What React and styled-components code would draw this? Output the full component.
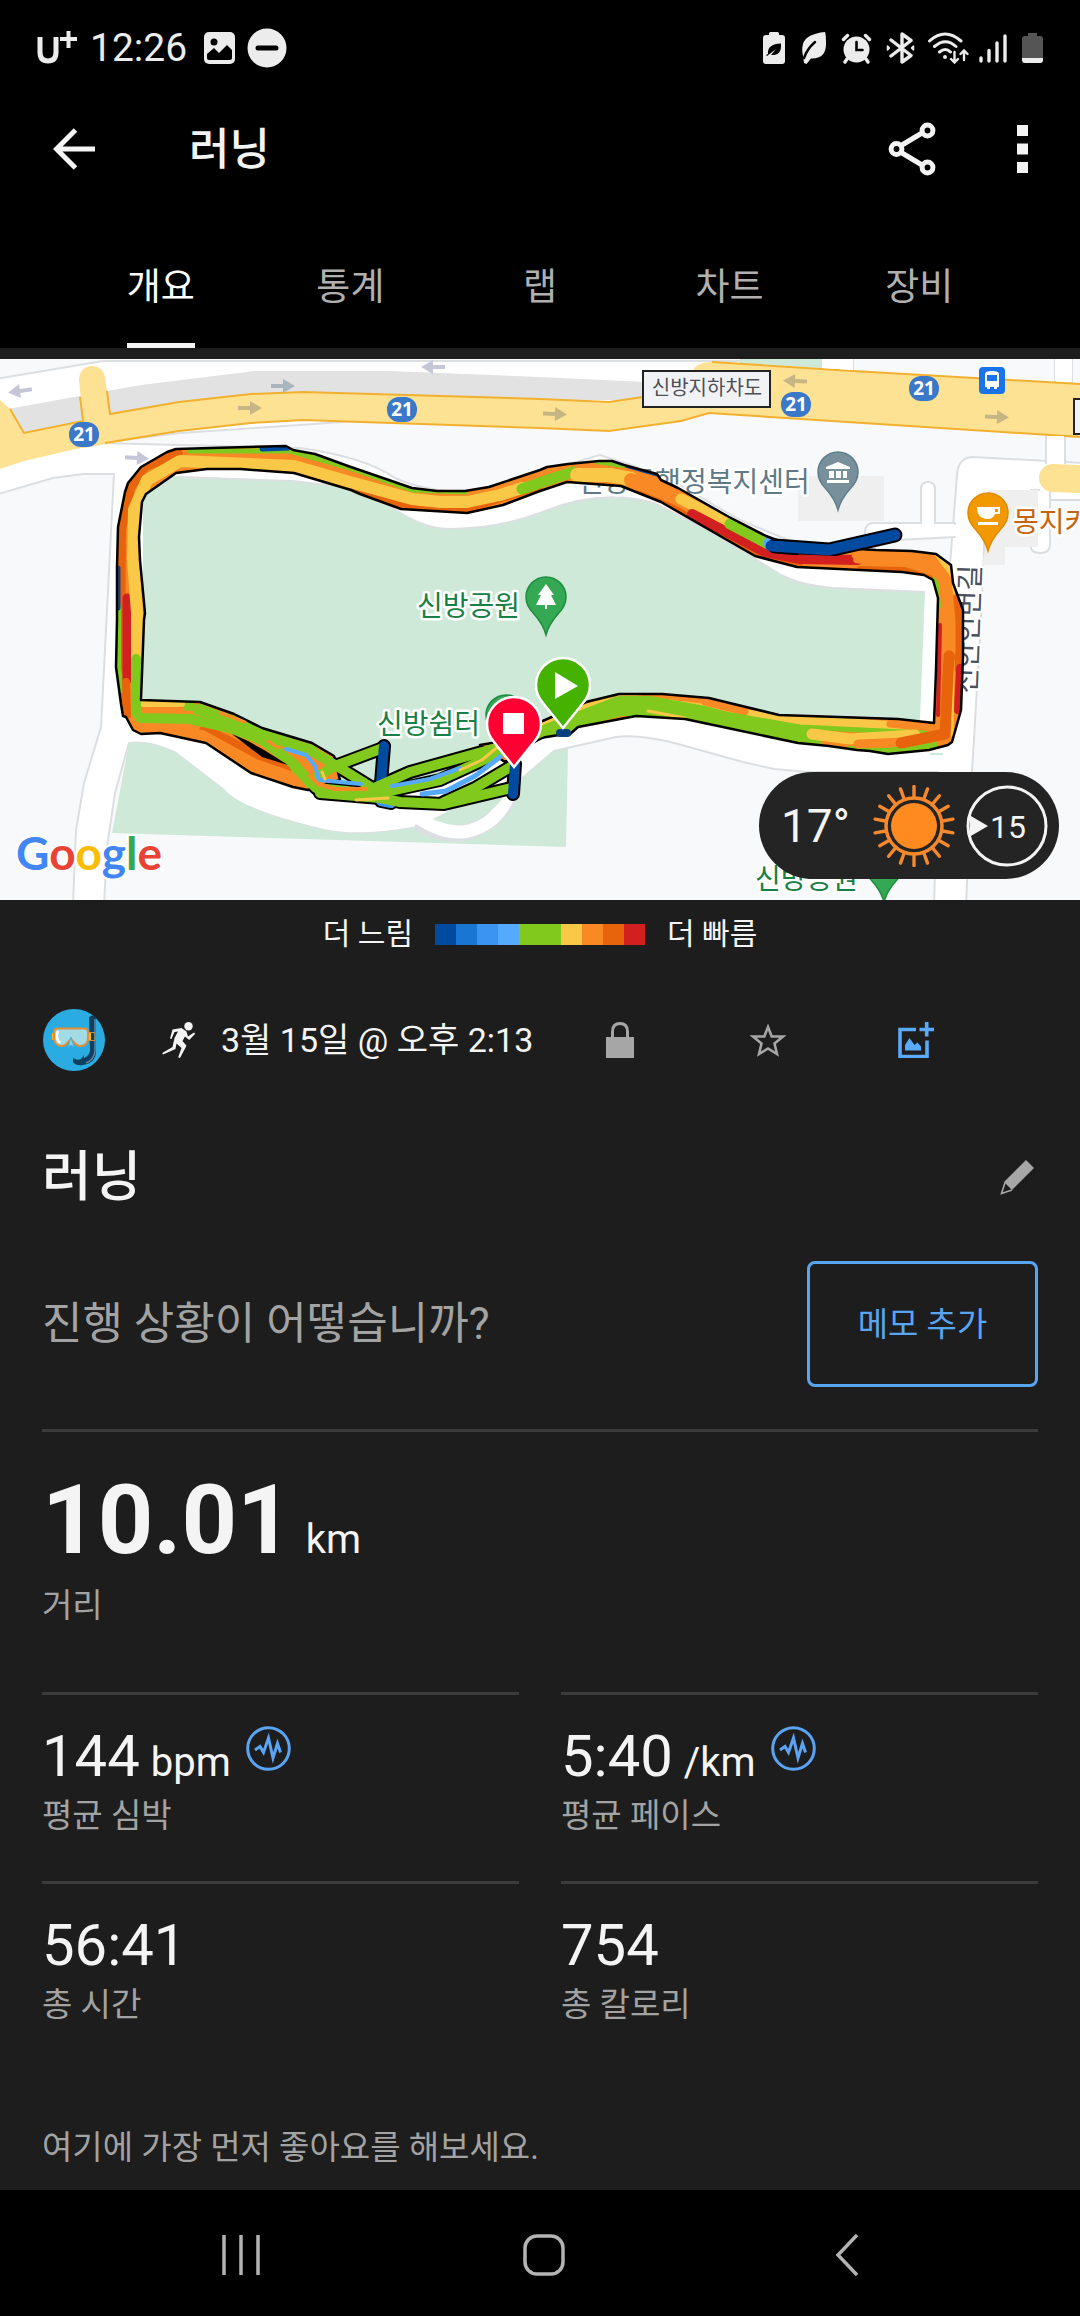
import styled, { createGlobalStyle } from 'styled-components';

const GlobalStyle = createGlobalStyle`
  * {
    box-sizing: border-box;
  }

  body {
    margin: 0;
    background: #1d1d1d;
    color: #f4f4f4;
    font-family: Roboto, 'Noto Sans CJK KR', sans-serif;
  }

  button {
    margin: 0;
    padding: 0;
    border: 0;
    background: none;
    color: inherit;
    font: inherit;
  }

  svg {
    display: block;
  }
`;

const Screen = styled.div`
  display: flex;
  flex-direction: column;
  min-height: 100vh;
`;

const Top = styled.header`
  background: #000;
`;

const StatusBar = styled.div`
  display: flex;
  align-items: center;
  justify-content: space-between;
  height: 96px;
  padding: 0 35px 0 36px;
  color: #ececec;
`;

const StatusLeft = styled.div`
  display: flex;
  align-items: center;
  gap: 12px;
`;

const Clock = styled.span`
  margin-right: 5px;
  font-size: 39px;
  line-height: 48px;
`;

const StatusRight = styled.div`
  display: flex;
  align-items: center;
  gap: 8px;
`;

const AppBar = styled.div`
  display: flex;
  align-items: center;
  height: 105px;
  padding: 0 2px 0 42px;
`;

const IconButton = styled.button`
  display: grid;
  place-items: center;
  width: ${({ $width }) => $width || 64}px;
  height: 64px;
  color: ${({ $color }) => $color || '#f4f4f4'};
`;

const BarTitle = styled.h1`
  flex: 1;
  margin: 0 0 0 83px;
  padding-top: 2px;
  font-size: 44px;
  font-weight: 500;
  line-height: 56px;
`;

const Tabs = styled.nav`
  display: flex;
  height: 147px;
  padding: 0 66px;
`;

const Tab = styled.button`
  flex: 1;
  display: flex;
  align-items: flex-end;
  justify-content: center;
  color: ${({ $active }) => ($active ? '#fff' : '#b0b0b0')};
  font-size: 37px;
  line-height: 48px;

  span {
    padding-bottom: 31px;
    border-bottom: 5px solid ${({ $active }) => ($active ? '#f4f4f4' : 'transparent')};
  }
`;

const Main = styled.main`
  flex: 1;
  padding-top: 11px;
`;

const MapFrame = styled.section`
  position: relative;

  > svg {
    width: 100%;
    height: auto;
  }
`;

const Weather = styled.div`
  position: absolute;
  right: 21px;
  bottom: 21px;
  display: flex;
  align-items: center;
  gap: 11px;
  width: 300px;
  height: 107px;
  padding: 0 11px 0 22px;
  border-radius: 54px;
  background: #242424;
  font-size: 46px;

  span {
    flex: 1;
  }
`;

const Legend = styled.div`
  display: flex;
  align-items: center;
  justify-content: center;
  gap: 22px;
  height: 64px;
  padding-top: 4px;
  font-size: 30px;
  line-height: 48px;
`;

const Scale = styled.div`
  display: flex;
`;

const Swatch = styled.i`
  width: 21px;
  height: 21px;
  background: ${({ $color }) => $color};
`;

const Meta = styled.div`
  display: flex;
  align-items: center;
  height: 152px;
  padding: 0 90px 0 43px;
`;

const When = styled.div`
  flex: 1;
  display: flex;
  align-items: center;
  gap: 25px;
  margin-left: 57px;
  font-size: 34px;
  line-height: 48px;
  white-space: nowrap;
`;

const TitleRow = styled.div`
  display: flex;
  align-items: center;
  justify-content: space-between;
  height: 122px;
  padding: 0 31px 0 42px;
`;

const Title = styled.h2`
  margin: 0;
  padding-top: 2px;
  font-size: 54px;
  font-weight: 500;
  line-height: 64px;
`;

const NoteRow = styled.div`
  display: flex;
  align-items: center;
  justify-content: space-between;
  padding: 23px 42px 42px;
  color: #a3a3a3;
  font-size: 44px;
  line-height: 56px;
`;

const NoteButton = styled.button`
  width: 231px;
  height: 126px;
  padding-top: 2px;
  border: 3px solid #5aa5f3;
  border-radius: 8px;
  color: #5aa5f3;
  font-size: 33px;
`;

const Stats = styled.dl`
  display: grid;
  grid-template-columns: 1fr 1fr;
  column-gap: 42px;
  margin: 0 42px;
`;

const Stat = styled.div`
  display: flex;
  flex-direction: column;
  grid-column: ${({ $wide }) => ($wide ? '1 / -1' : 'auto')};
  padding: ${({ $wide }) => ($wide ? '28px 0 62px' : '27px 0 41px')};
  border-top: 3px solid #3b3b3b;
`;

const Value = styled.dd`
  display: flex;
  align-items: baseline;
  order: -1;
  margin: 0 0 2px;
  font-size: ${({ $large }) => ($large ? 97 : 58)}px;
  font-weight: ${({ $large }) => ($large ? 700 : 400)};
  line-height: ${({ $large }) => ($large ? 120 : 68)}px;
  white-space: pre;

  small {
    margin-left: ${({ $large }) => ($large ? 13 : 11)}px;
    font-size: 40px;
    font-weight: 400;
    line-height: 40px;
  }

  svg {
    align-self: flex-start;
    margin: 4px 0 0 15px;
  }
`;

const Label = styled.dt`
  color: #a3a3a3;
  font-size: 33px;
  line-height: 48px;
`;

const Likes = styled.p`
  margin: 0;
  padding: 54px 42px 18px;
  color: #a3a3a3;
  font-size: 33px;
  line-height: 48px;
`;

const SystemNav = styled.footer`
  display: flex;
  height: 126px;
  padding: 4px 82px 0 90px;
  background: #000;
`;

const NavButton = styled.button`
  flex: 1;
  display: grid;
  place-items: center;
`;

const MapText = styled.text`
  fill: ${({ $fill }) => $fill};
  font-family: Roboto, 'Noto Sans CJK KR', sans-serif;
  font-size: 28px;
  paint-order: stroke;
  stroke: #fff;
  stroke-width: 5px;
  stroke-linejoin: round;
`;

const ShieldText = styled.text`
  fill: #fff;
  font-family: 'Noto Sans', sans-serif;
  font-size: 19px;
  font-weight: 700;
  text-anchor: middle;
`;

const SignText = styled.text`
  fill: #4d4f55;
  font-family: 'Noto Sans CJK KR', sans-serif;
  font-size: 20px;
  text-anchor: middle;
`;

const LogoText = styled.text`
  font-family: Lato, sans-serif;
  font-size: 46px;
  font-weight: 700;
  paint-order: stroke;
  stroke: #fff;
  stroke-width: 4px;
  stroke-linejoin: round;
`;

const tabs = ['개요', '통계', '랩', '차트', '장비'];

const scale = [
  '#004a9f', '#1976d2', '#3c94f2', '#55aaff', '#82c91e',
  '#82c91e', '#f9c846', '#f98925', '#e8640c', '#d21f20',
];

const stats = [
  { value: '144', unit: 'bpm', label: '평균 심박', graph: true },
  { value: '5:40', unit: '/km', label: '평균 페이스', graph: true },
  { value: '56:41', label: '총 시간' },
  { value: '754', label: '총 칼로리' },
];

/* ---------- status icons ---------- */

const Carrier = () => (
  <svg width="42" height="40" viewBox="0 0 42 40" fill="none" stroke="currentColor">
    <path d="M4 9v15q0 9 8 9t8-9V9" strokeWidth="5" />
    <path d="M24 11h17M32.500 3v17" strokeWidth="4" />
  </svg>
);

const PictureIcon = () => (
  <svg width="31" height="32" viewBox="0 0 31 32">
    <rect width="31" height="32" rx="5" fill="currentColor" />
    <circle cx="10" cy="10" r="3.500" />
    <path d="M3 22l7-6 5 5 8-8 5 5v8q0 2-2 2H5q-2 0-2-2z" />
  </svg>
);

const DndIcon = () => (
  <svg width="40" height="40" viewBox="0 0 40 40">
    <circle cx="20" cy="20" r="19.500" fill="currentColor" />
    <rect x="8.500" y="17.500" width="23" height="5" rx="2.500" />
  </svg>
);

const StatusIcons = () => (
  <>
    <svg width="26" height="32" viewBox="0 0 26 32">
      <path d="M6 3V1.500Q6 0 7.500 0h7Q16 0 16 1.500V3h3q3 0 3 3v23q0 3-3 3H3q-3 0-3-3V6q0-3 3-3z" fill="currentColor" />
      <path d="M5 22Q4 12 18 11.500 19 24 8 23l5-6-9 7-1-1z" />
    </svg>
    <svg width="34" height="32" viewBox="0 0 34 32">
      <path d="M6 24Q2 6 18 2q6-2 10-2 1 2 1 12 0 15-15 14.500L9.500 32 7 31z" fill="currentColor" />
      <path d="M7 26q3-9 11-16" fill="none" stroke="#000" strokeWidth="2.400" strokeLinecap="round" />
    </svg>
    <svg width="36" height="32" viewBox="0 0 36 32" fill="none" stroke="currentColor" strokeWidth="3.400" strokeLinecap="round">
      <circle cx="17.500" cy="17.500" r="13" fill="currentColor" stroke="none" />
      <path d="M4.500 7.500l4-4M30.500 7.500l-4-4M8 27l-2 3M27 27l2 3" />
      <path d="M17.500 10v8h6" stroke="#000" strokeWidth="2.600" />
    </svg>
    <svg width="34" height="32" viewBox="0 0 34 32" fill="none" stroke="currentColor" strokeWidth="3.400" strokeLinejoin="round" strokeLinecap="round">
      <path d="M8 8l20 15.500-9 6.500V2l9 6.500L8 24" />
      <path d="M4.500 14v4l2-2zM30.500 14v4l-2-2z" strokeWidth="1.500" fill="currentColor" />
    </svg>
    <svg width="46" height="32" viewBox="0 0 46 32" fill="none" stroke="currentColor" strokeWidth="3" strokeLinecap="round">
      <path d="M4.500 9q15.500-14 31.500 0M9.500 14.500q11-9.500 21.500 0M14.500 20q6-5 11 0" />
      <circle cx="20" cy="25" r="2" fill="currentColor" stroke="none" />
      <path d="M29.500 20v9M26 27l3.500 3.500L33 27M39 28v-9M35.500 22l3.500-3.500 3.500 3.500" strokeWidth="2.400" />
    </svg>
    <svg width="32" height="32" viewBox="0 0 32 32" stroke="currentColor" strokeWidth="3.400" strokeLinecap="round">
      <path d="M2 26v3M10 18.500V29M18 11v18M26 4v25" />
    </svg>
    <svg width="26" height="32" viewBox="0 0 26 32">
      <path d="M9 4V1h9v3h3q3 0 3 3v19H3V7q0-3 3-3z" fill="#555" />
      <path d="M3 26h21v2q0 3-3 3H6q-3 0-3-3z" fill="currentColor" />
    </svg>
  </>
);

/* ---------- page icons ---------- */

const BackIcon = () => (
  <svg width="42" height="42" viewBox="0 0 42 42" fill="none" stroke="currentColor" strokeWidth="5">
    <path d="M22.500 2L3.500 21l19 19M4 21h38" />
  </svg>
);

const ShareIcon = () => (
  <svg width="48" height="54" viewBox="0 0 48 54" fill="none" stroke="currentColor" strokeWidth="5">
    <path d="M14 23l20-12M14 31l20 12" />
    <circle cx="8.500" cy="27" r="5.400" />
    <circle cx="39.500" cy="8.500" r="5.400" />
    <circle cx="39.500" cy="45.500" r="5.400" />
  </svg>
);

const MoreIcon = () => (
  <svg width="11" height="48" viewBox="0 0 11 48" fill="currentColor">
    <path d="M0 0h11v11H0zM0 18.500h11v11H0zM0 37h11v11H0z" />
  </svg>
);

const Avatar = () => (
  <svg width="62" height="62" viewBox="0 0 62 62" role="img" aria-label="프로필">
    <circle cx="31" cy="31" r="31" fill="#2aace3" />
    <path d="M46 8q4-3 7 0v34q0 12-13 14-7 1-10-3v-4q5 3 8 1l3-4v3q6-3 6-8z" fill="#0f3f60" />
    <path d="M52 10v32q-1 9-9 12" fill="none" stroke="#6389a3" strokeWidth="1.500" />
    <path d="M45 23.500h7v8h-7z" fill="none" stroke="#c98a3c" strokeWidth="1" />
    <path d="M9 24h3v7H9zM45 24h3v7h-3z" fill="#fbb11c" />
    <path d="M15 19.500h26q4 0 4 4v5q0 8-7 8.500-5 0-7-4l-3-3-3 3q-2 4-7 4-7-1-7-8.500v-5q0-4 4-4z" fill="#a0dbe6" stroke="#e58d35" strokeWidth="2" />
    <path d="M15 22q-3 7 2 12" fill="none" stroke="#fff" strokeWidth="2.500" />
    <path d="M25 38l3-10 3 10-3-2z" fill="#86d3ee" stroke="#49b4dc" />
  </svg>
);

const RunIcon = () => (
  <svg width="34" height="36" viewBox="0 0 34 36" fill="currentColor">
    <circle cx="26.500" cy="4.200" r="4.200" />
    <path d="M10.500 7.500l9-1.500 5 3.500 1.500 5 6-4 1.200 1.300-6 6.200-4.200-3.500-2.500 4.500 4 4.800L18 36l-1.800-.8L19.500 26 14.500 21.500 13.500 27 1 32.500.3 31l10.200-6L12.500 16 16 9.500l-3.500.5-3 7L8 16.500z" />
  </svg>
);

const LockIcon = () => (
  <svg width="28" height="36" viewBox="0 0 28 36">
    <path d="M0 15h28v21H0z" fill="currentColor" />
    <path d="M6.500 16V9.500q0-8 7.500-8t7.500 8V16" fill="none" stroke="currentColor" strokeWidth="3" />
  </svg>
);

const StarIcon = () => (
  <svg width="36" height="34" viewBox="0 0 36 34" fill="none" stroke="currentColor" strokeWidth="2.600">
    <path d="M18 4l3.700 9.500H33L24.500 20.500 27 31 18 25.500 9 31l2.500-10.500L3 13.500h11.300z" />
  </svg>
);

const AddPhotoIcon = () => (
  <svg width="36" height="36" viewBox="0 0 36 36">
    <path d="M18 7.500H2v27h27V18.500M21.500 7.500H36M28.700 0v14.500" fill="none" stroke="currentColor" strokeWidth="3.600" />
    <path d="M7 28.500V23l4.500-7 5 7 3-2.500 3.500 4v4z" fill="currentColor" />
  </svg>
);

const PencilIcon = () => (
  <svg width="34" height="35" viewBox="0 0 34 35">
    <path d="M26 0l8 8-22 22-8-8z" fill="currentColor" />
    <path d="M5 22.500L1.500 33.500 12 30" fill="none" stroke="currentColor" strokeWidth="1.600" />
  </svg>
);

const GraphIcon = () => (
  <svg width="45" height="45" viewBox="0 0 45 45" fill="none" stroke="#5aa5f3" strokeWidth="3">
    <circle cx="22.500" cy="22.500" r="20.800" />
    <path d="M9 24l5-3.500 3.500 6L22.500 12 27 32l4.500-14.500 3 9" />
  </svg>
);

const rays = Array.from({ length: 18 }, (_, i) => i * 20);

const SunIcon = () => (
  <svg width="82" height="82" viewBox="-41 -41 82 82" stroke="#f5892b" fill="none">
    <circle r="23" fill="#ff8a1f" stroke="none" />
    <circle r="28" strokeWidth="3.500" />
    {rays.map((angle) => (
      <path key={angle} d="M0-29V-39.500" strokeWidth="3.400" strokeLinecap="round" transform={`rotate(${angle})`} />
    ))}
  </svg>
);

const WindDial = () => (
  <svg width="82" height="82" viewBox="-41 -41 82 82">
    <circle r="39" fill="none" stroke="#f4f4f4" strokeWidth="3" />
    <path d="M-37-10.500L-19 0l-18 10.500z" fill="#f4f4f4" />
    <text x="1" y="12" fill="#f4f4f4" fontSize="32" textAnchor="middle">15</text>
  </svg>
);

/* ---------- map ---------- */

const OUTLINE =
  'M308 790L293 787 251 773 206 743 160 733 141 734 133 730 126 717 123 716 121 704 116 667 117 620 117 567 118 527 125 492 128 483 141 467 167 452 176 449 286 446 293 450 315 454 348 466 412 488 437 491 465 491 489 487 540 470 547 467 568 464 599 461 612 461 624 465 657 474 661 480 678 488 729 517 766 536 790 545 876 550 912 551 936 554 951 565 953 583 963 610 963 657 961 710 952 742 948 745 929 750 888 754 870 751 857 750 829 746 798 743 685 719 636 716 578 727 569 735 559 735 540 738 505 762 480 745 492 743 586 702 619 694 662 694 709 698 779 715 898 719 934 723 936 670 938 598 933 580 924 575 902 572 797 567 755 556 661 502 621 486 567 482 540 491 503 505 467 513 401 509 360 494 351 490 294 473 241 469 207 469 176 473 146 494 142 502 139 537 140 560 145 613 144 620 141 700 200 702 234 714 262 728 312 743 334 756 340 780z';

// laps inside the outline, painted back to front
const bands = [
  ['#e8640c', 10, 'M124 715L120 670 121 530 130 488 145 466 178 454'],
  ['#82c91e', 6, 'M118 606V668L122 690'],
  ['#1d3f80', 5, 'M118 568V608'],
  ['#82c91e', 5, 'M190 451L290 451 350 468 412 490 465 492'],
  ['#004a9f', 5, 'M262 449L289 448'],
  ['#e8640c', 6, 'M351 486L401 505 467 510 540 487'],
  ['#d21f20', 3, 'M285 471L325 482'],
  ['#d21f20', 9, 'M127 598V680'],
  ['#e8640c', 8, 'M126 682L127 715'],
  ['#f9c846', 12, 'M137 658L137 613 133 560 134 510 147 480 180 461 294 466 350 482 412 499 440 502 467 502 500 495 522 488'],
  ['#004a9f', 4, 'M624 465L659 475'],
  ['#82c91e', 4, 'M596 462L624 466'],
  ['#82c91e', 11, 'M522 489L545 481 573 472'],
  ['#f9c846', 14, 'M577 475L610 475 631 479'],
  ['#e8640c', 6, 'M640 494L670 506 755 552 800 564'],
  ['#f98925', 14, 'M631 480L655 489 679 499'],
  ['#f9c846', 11, 'M681 499L728 523'],
  ['#d21f20', 10, 'M692 514L765 552 800 559 858 560'],
  ['#82c91e', 11, 'M730 524L768 544'],
  ['#55aaff', 11, 'M769 543L770 545'],
  ['#82c91e', 5, 'M905 570L936 580 940 605'],
  ['#f9c846', 9, 'M925 555L949 566 952 590'],
  ['#e8640c', 10, 'M956 600L959 668'],
  ['#d21f20', 8, 'M960 668L958 710'],
  ['#e8640c', 6, 'M860 569L905 570 930 578'],
  ['#f98925', 13, 'M858 557L930 560 945 580 949 620 949 652'],
  ['#f9c846', 3, 'M953 660L952 735'],
  ['#d21f20', 4, 'M940 625L938 715'],
  ['#f9c846', 10, 'M620 698L780 719 905 727'],
  ['#f98925', 7, 'M705 702L745 712M890 724L938 729'],
  ['#82c91e', 5, 'M640 699L800 727 925 733'],
  ['#82c91e', 20, 'M545 732L590 714 620 706 650 706 700 715 760 731 812 739'],
  ['#82c91e', 6, 'M850 749L888 751 935 745'],
  ['#f9c846', 4, 'M540 724L612 696'],
  ['#f9c846', 3, 'M648 711L685 718'],
  ['#f9c846', 11, 'M812 734L850 739 915 735'],
  ['#f98925', 9, 'M858 744L905 742'],
  ['#e8640c', 11, 'M901 743L945 734 949 656'],
  ['#82c91e', 10, 'M188 707L232 720 262 734 312 750'],
  ['#e8640c', 12, 'M205 731L240 748 300 778'],
  ['#f9c846', 6, 'M143 704H182'],
  ['#f98925', 12, 'M131 724L145 728 165 728 202 736 255 765 308 783'],
  ['#f98925', 4, 'M141 709L192 713'],
  ['#82c91e', 10, 'M136 659V712L140 718 190 719 230 728 262 740 295 765 314 788'],
];

// the criss-crossing part near the shelter
const strands = [
  ['#3c94f2', 'M381 801L391 803'],
  ['#82c91e', 'M200 709L232 721 262 735 310 750 345 771 374 789'],
  ['#82c91e', 'M318 776L335 766 383 748'],
  ['#004a9f', 'M384 746L381 783'],
  ['#82c91e', 'M374 788L410 772 500 747 545 730'],
  ['#82c91e', 'M444 802L475 788 512 766'],
  ['#82c91e', 'M320 793L380 798 400 802 444 804 511 788'],
  ['#004a9f', 'M515 764L513 794'],
  ['#82c91e', 'M295 767L316 788 376 794 440 780 505 750 545 730'],
];

const glints = [
  ['#55aaff', 4, 'M286 749L306 755 315 766 319 780 361 784'],
  ['#f98925', 4, 'M310 776L318 784 335 789 366 789'],
  ['#f9c846', 3, 'M322 772L325 779M356 800L388 798'],
  ['#f98925', 3, 'M268 741L278 748M220 713L245 722'],
  ['#55aaff', 4, 'M392 786L430 779 460 768'],
  ['#55aaff', 5, 'M422 794L446 791 475 776 500 757'],
  ['#f9c846', 3, 'M460 770L482 760 500 745'],
];

const streetArrows = [
  [20, 391, 172, '#c5c7d9'],
  [433, 367, 180, '#c5c7d9'],
  [283, 386, 0, '#a9b5bd'],
  [250, 408, 0, '#c6b684'],
  [137, 458, 3, '#c5c7d9'],
  [555, 414, 2, '#c6b684'],
  [795, 381, 182, '#c6b684'],
  [997, 417, 2, '#c6b684'],
];

const shields = [[84, 434], [402, 409], [796, 404], [924, 388]];

const PlacePin = ({ x, y, color, edge, children }) => (
  <g transform={`translate(${x} ${y})`}>
    <path d="M0 38Q-3 27-12 17-20 9-20 0A20 20 0 0 1 20 0Q20 9 12 17 3 27 0 38z" fill={color} stroke={edge} strokeWidth="1.500" />
    {children}
  </g>
);

const RoutePin = ({ x, y, color, children }) => (
  <g transform={`translate(${x} ${y})`}>
    <path d="M0 43L-20 18Q-27 10-27 0A27 27 0 0 1 27 0Q27 10 20 18z" fill={color} stroke="#fff" strokeWidth="2.500" />
    {children}
  </g>
);

const Tree = () => <path d="M0-13L8-2H5L10 8H1V12H-1V8H-10L-5-2H-8z" fill="#fff" />;

const RouteMap = () => (
  <svg viewBox="0 359 1080 541" role="img" aria-label="러닝 경로 지도">
    <rect y="359" width="1080" height="541" fill="#f8f9fb" />

    {/* side roads */}
    <g fill="#fff" stroke="#dcdfe1" strokeWidth="2">
      <path d="M-5 379L103 361H745V378L640 400 300 425 180 433 100 443 300 448Q365 457 395 478 425 492 470 492L600 455 662 475 740 520 800 545 950 565 957 475Q958 458 972 457L1085 463V500H1030L984 500V550L981 620 972 772 966 905H934L938 772H808L774 769 743 762 678 744Q640 734 616 737L554 751 520 780 417 827Q360 838 324 830 240 810 224 790L176 753Q150 740 129 743L115 793 107 847 104 905H73L76 830 84 783 101 727 106 630 114 474H83L53 478-5 495z" />
      <path d="M822 350H853V375H822zM1055 350H1072V388H1055zM1046 430H1065V470H1046z" />
      <path d="M955 523H935V489Q935 482 928 482T921 489V523H872Q865 524 865 533T876 541L955 537z" />
      <path d="M1031 490H1050V545Q1050 553 1040 553T1031 545z" />
    </g>
    <path d="M950 525H960V536H950zM1040 464H1085V491H1040zM1047 455H1064V470H1047z" fill="#fff" />
    <path d="M798 476H884V521H798zM988 490H1038V547H1005V565H982L985 550z" fill="#efeff0" />
    <path d="M740 359H822V368L740 363z" fill="#cfe9d8" />

    {/* parks */}
    <path d="M143 476H179L293 481 344 487Q375 495 396 510 424 529 451 529 500 528 540 513 600 488 654 503L712 532 781 575Q800 585 833 588L925 592 919 745 700 720 620 710 500 750 400 795 300 770 143 715z" fill="#cfe9d8" />
    <path d="M179 477L293 481 344 487Q375 495 396 510 424 529 451 529 500 528 540 513 600 488 654 503L712 532 781 575Q800 585 833 588L925 592" fill="none" stroke="#dcdfe1" strokeWidth="2" />
    <path d="M112 833L129 743Q150 740 176 753L224 790Q240 810 324 830 360 838 417 827L520 780 554 751 568 748 566 847z" fill="#cfe9d8" />
    <path d="M417 822Q450 842 480 827 505 815 514 785" fill="none" stroke="#dcdfe1" strokeWidth="16" />
    <path d="M410 812Q450 842 480 827 505 815 514 780" fill="none" stroke="#fff" strokeWidth="13" />
    <path d="M434 820L460 803 506 793Q495 815 460 822 445 824 434 820z" fill="#cfe9d8" />
    <path d="M930 753h13v2h-13z" fill="#cfe9d8" />

    {/* highway */}
    <path d="M8 409L107 391 141 385 255 371H389L540 377 645 382V400H540L303 394 110 416 24 435z" fill="#e2e2e2" />
    <path d="M0 400L10 409 24 433 83 421 79 380A13 13 0 0 1 105 378L110 414 179 402 251 394 303 392 540 399 609 402 643 397 692 380Q690 362 712 362L853 371 1080 384V437L709 413 681 421 609 431 540 428 303 420 251 423 179 431 114 443 76 449 24 461 0 469z" fill="#fde293" />
    <path d="M10 409L24 433 83 421 80 397M107 391L110 414 179 402 251 394 303 392 540 399 609 402 643 397M712 362L853 371 1080 384M1080 437L709 413 681 421 609 431 540 428 303 420 251 423 179 431 105 443" fill="none" stroke="#f2b02f" strokeWidth="2" />
    <path d="M1080 465L1053 464A14 14 0 0 0 1053 492L1080 493z" fill="#fde293" />
    <path d="M822 359H853V370L822 368zM1055 359H1072V382L1055 381zM1049 436H1064V445H1049z" fill="#fff" />

    {streetArrows.map(([x, y, angle, color]) => (
      <path key={`${x}-${y}`} d="M-12-2H0V-7L12 0 0 7V2H-12z" fill={color} transform={`translate(${x} ${y}) rotate(${angle})`} />
    ))}

    {shields.map(([x, y]) => (
      <g key={x}>
        <rect x={x - 15} y={y - 12} width="30" height="25" rx="12" fill="#3c78c8" />
        <ShieldText x={x} y={y + 7}>21</ShieldText>
      </g>
    ))}

    <rect x="643" y="371" width="127" height="36" fill="#f1f2f6" stroke="#222" strokeWidth="2" />
    <SignText x="707" y="395">신방지하차도</SignText>
    <rect x="1074" y="399" width="20" height="35" fill="#f1f2f6" stroke="#222" strokeWidth="2" />

    <rect x="979" y="367" width="26" height="27" rx="4" fill="#1a73e8" />
    <path d="M985 374Q985 371 992 371T999 374V387H997V389H994V387H990V389H987V387H985z" fill="#fff" />
    <path d="M987 375H997V381H987z" fill="#1a73e8" />

    {/* places */}
    <MapText x="578" y="492" $fill="#5e7a88">신방동행정복지센터</MapText>
    <MapText x="1013" y="532" $fill="#c5640c">몽지카</MapText>
    <MapText x="417" y="616" $fill="#188044">신방공원</MapText>
    <MapText x="377" y="734" $fill="#188044">신방쉼터</MapText>
    <MapText x="755" y="889" $fill="#188044">신방공원</MapText>
    <MapText $fill="#4a505c" transform="translate(976 694) rotate(-88)">신안인번길</MapText>

    <PlacePin x="838" y="472" color="#78909c" edge="#607d8b">
      <path d="M-12-5L0-10 12-5V-3H-12zM-9-1H-4V6H-9zM-2-1H3V6H-2zM5-1H9V6H5zM-11 8H11V11H-11z" fill="#fff" />
    </PlacePin>
    <PlacePin x="988" y="513" color="#f29900" edge="#e08a00">
      <path d="M-11-6H12V1H7Q5 6 0 6-11 6-11-6zM-10 9H10V12H-10z" fill="#fff" />
      <path d="M7-4H10V-1H7z" fill="#f29900" />
    </PlacePin>
    <PlacePin x="546" y="597" color="#34a853" edge="#1e8e3e">
      <Tree />
    </PlacePin>
    <PlacePin x="506" y="715" color="#34a853" edge="#1e8e3e" />
    <PlacePin x="884" y="864" color="#34a853" edge="#1e8e3e">
      <Tree />
    </PlacePin>

    {/* route */}
    <clipPath id="route">
      <path d={OUTLINE} />
    </clipPath>
    <g fill="none" stroke="#000" strokeWidth="14" strokeLinejoin="round" strokeLinecap="round">
      {strands.map(([, d]) => (
        <path key={d} d={d} />
      ))}
    </g>
    <path d={OUTLINE} fill="#f98925" />
    <g clipPath="url(#route)" fill="none" strokeLinejoin="round" strokeLinecap="round">
      {bands.map(([color, width, d]) => (
        <path key={d} d={d} stroke={color} strokeWidth={width} />
      ))}
    </g>
    <path d={OUTLINE} fill="none" stroke="#000" strokeWidth="2.500" strokeLinejoin="round" />
    <path d="M232 734L248 741 264 750 288 765 262 757z" />
    <g fill="none" strokeLinejoin="round" strokeLinecap="round">
      <path d="M775 546L829 550 895 535" stroke="#000" strokeWidth="15" />
      <path d="M771 546L829 550 895 535" stroke="#004a9f" strokeWidth="11" />
      <path d="M800 558L850 560" stroke="#d21f20" strokeWidth="7" />
      <path d="M560 733H567" stroke="#0a3f80" strokeWidth="8" />
      <g strokeWidth="10">
        {strands.map(([color, d]) => (
          <path key={d} d={d} stroke={color} />
        ))}
      </g>
      {glints.map(([color, width, d]) => (
        <path key={d} d={d} stroke={color} strokeWidth={width} />
      ))}
    </g>

    <RoutePin x="563" y="685" color="#46b200">
      <path d="M-8-13L15 1-8 14z" fill="#fff" />
    </RoutePin>
    <RoutePin x="514" y="724" color="#ff0033">
      <path d="M-11-11H10V10H-11z" fill="#fff" />
    </RoutePin>

    <LogoText x="16" y="870">
      <tspan fill="#4285f4">G</tspan>
      <tspan fill="#ea4335">o</tspan>
      <tspan fill="#fbbc05">o</tspan>
      <tspan fill="#4285f4">g</tspan>
      <tspan fill="#34a853">l</tspan>
      <tspan fill="#ea4335">e</tspan>
    </LogoText>
  </svg>
);

const App = () => (
  <Screen>
    <GlobalStyle />
    <Top>
      <StatusBar>
        <StatusLeft>
          <Carrier />
          <Clock>12:26</Clock>
          <PictureIcon />
          <DndIcon />
        </StatusLeft>
        <StatusRight>
          <StatusIcons />
        </StatusRight>
      </StatusBar>
      <AppBar>
        <IconButton aria-label="뒤로">
          <BackIcon />
        </IconButton>
        <BarTitle>러닝</BarTitle>
        <IconButton $width={111} aria-label="공유">
          <ShareIcon />
        </IconButton>
        <IconButton $width={111} aria-label="더보기">
          <MoreIcon />
        </IconButton>
      </AppBar>
      <Tabs>
        {tabs.map((tab, i) => (
          <Tab key={tab} $active={i === 0}>
            <span>{tab}</span>
          </Tab>
        ))}
      </Tabs>
    </Top>

    <Main>
      <MapFrame>
        <RouteMap />
        <Weather>
          <span>17°</span>
          <SunIcon />
          <WindDial />
        </Weather>
      </MapFrame>
      <Legend>
        <span>더 느림</span>
        <Scale>
          {scale.map((color, i) => (
            <Swatch key={i} $color={color} />
          ))}
        </Scale>
        <span>더 빠름</span>
      </Legend>

      <Meta>
        <Avatar />
        <When>
          <RunIcon />
          <span>3월 15일 @ 오후 2:13</span>
        </When>
        <IconButton $width={148} $color="#a6a6a6" aria-label="비공개">
          <LockIcon />
        </IconButton>
        <IconButton $width={148} $color="#a6a6a6" aria-label="즐겨찾기">
          <StarIcon />
        </IconButton>
        <IconButton $width={148} $color="#5aa9fa" aria-label="사진 추가">
          <AddPhotoIcon />
        </IconButton>
      </Meta>

      <TitleRow>
        <Title>러닝</Title>
        <IconButton $color="#a6a6a6" aria-label="이름 편집">
          <PencilIcon />
        </IconButton>
      </TitleRow>
      <NoteRow>
        진행 상황이 어떻습니까?
        <NoteButton>메모 추가</NoteButton>
      </NoteRow>

      <Stats>
        <Stat $wide>
          <Label>거리</Label>
          <Value $large>
            10.01<small>km</small>
          </Value>
        </Stat>
        {stats.map(({ value, unit, label, graph }) => (
          <Stat key={label}>
            <Label>{label}</Label>
            <Value>
              {value}
              {unit && <small>{unit}</small>}
              {graph && <GraphIcon />}
            </Value>
          </Stat>
        ))}
      </Stats>
      <Likes>여기에 가장 먼저 좋아요를 해보세요.</Likes>
    </Main>

    <SystemNav>
      <NavButton aria-label="최근 앱">
        <svg width="40" height="40" viewBox="0 0 40 40" stroke="#b3b3b3" strokeWidth="3.500">
          <path d="M3 0v40M20 0v40M37 0v40" />
        </svg>
      </NavButton>
      <NavButton aria-label="홈">
        <svg width="42" height="42" viewBox="0 0 42 42" fill="none" stroke="#b3b3b3" strokeWidth="3.500">
          <rect x="2" y="2" width="38" height="38" rx="12" />
        </svg>
      </NavButton>
      <NavButton aria-label="이전">
        <svg width="24" height="42" viewBox="0 0 24 42" fill="none" stroke="#b3b3b3" strokeWidth="3.500">
          <path d="M22 1L3 21l19 20" />
        </svg>
      </NavButton>
    </SystemNav>
  </Screen>
);

export default App;
